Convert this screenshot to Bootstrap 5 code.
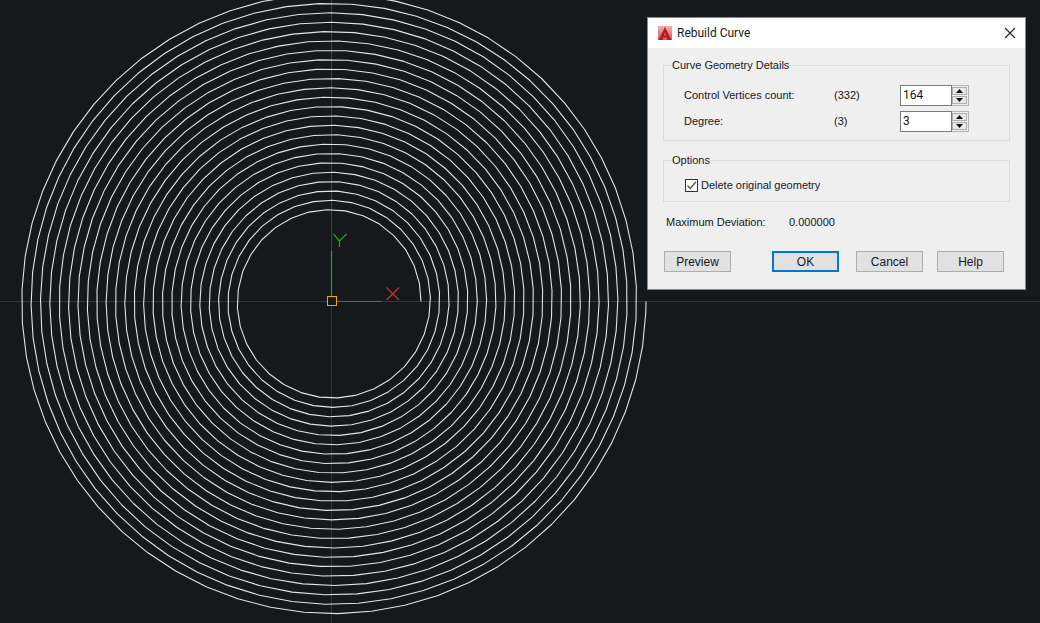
<!DOCTYPE html>
<html lang="en">
  <head>
    <meta charset="UTF-8" />
    <title>Rebuild Curve</title>
    <link href="https://cdn.jsdelivr.net/npm/bootstrap@5.3.3/dist/css/bootstrap.min.css" rel="stylesheet" />
    <style>
      html, body {
        height: 100%;
      }
      body {
        margin: 0;
        overflow: hidden;
        background-color: #15191c;
        position: relative;
        font-family: "Liberation Sans", Arial, sans-serif;
        font-size: 11px;
        color: #16161e;
      }
      .cad-canvas {
        position: absolute;
        left: 0;
        top: 0;
        width: 1040px;
        height: 623px;
      }
      .dlg-window {
        position: absolute;
        left: 647px;
        top: 17px;
        width: 379px;
        height: 273px;
        background-color: #efefef;
        border: 1px solid #8a8a8a;
      }
      .dlg-title {
        height: 30px;
        background-color: #fff;
        padding: 0 9px 0 10px;
        font-family: Roboto, "Liberation Sans", sans-serif;
        font-size: 12px;
        line-height: 30px;
      }
      .dlg-title-text {
        margin-left: 5px;
      }
      .dlg-body {
        padding: 11px 15px 0 15px;
      }
      .dlg-group {
        border: 1px solid #dcdcdc;
        margin: 0;
        padding: 0;
      }
      .dlg-group legend {
        float: none;
        width: auto;
        font-size: 11px;
        line-height: 12px;
        margin: 0 0 0 8px;
        padding: 0;
      }
      .dlg-group-geo {
        height: 82px;
      }
      .dlg-group-opt {
        height: 48px;
        margin-top: 13px;
      }
      .geo-rows {
        padding: 14px 0 0 20px;
      }
      .opt-rows {
        padding: 11px 0 0 21px;
      }
      .geo-row {
        height: 21px;
        margin-bottom: 5px;
      }
      .geo-label {
        width: 150px;
      }
      .geo-orig {
        width: 66px;
      }
      .spin-box {
        width: 69px;
        height: 21px;
      }
      .spin-value {
        width: 52px;
        height: 21px;
        background-color: #fff;
        border: 1px solid #7a7a7a;
        padding: 0 2px;
        line-height: 18px;
        font-family: Roboto, "Liberation Sans", sans-serif;
        font-size: 12px;
      }
      .spin-btns {
        width: 17px;
        height: 21px;
        border: 1px solid #b4b4b4;
        border-left: 0;
        padding: 1px 1px 1px 0;
        gap: 1px;
      }
      .spin-btn {
        flex: 1;
        background-color: #e8e8e8;
        border: 1px solid #adadad;
      }
      .dlg-check {
        width: 13px;
        height: 13px;
        border: 1px solid #333;
        background-color: #fff;
        margin-right: 3px;
      }
      .dev-row {
        margin: 13px 0 0 3px;
        height: 14px;
      }
      .dev-label {
        width: 123px;
      }
      .dlg-buttons {
        margin: 22px 0 0 1px;
      }
      .dlg-btn {
        width: 67px;
        height: 21px;
        padding: 0;
        border: 1px solid #adadad;
        border-radius: 0;
        background-color: #e1e1e1;
        color: #16161e;
        font-size: 12px;
        line-height: 18px;
      }
      .dlg-btn-default {
        border: 2px solid #0078d7;
        margin-left: 41px;
      }
      .dlg-btn-cancel {
        margin-left: 17px;
      }
      .dlg-btn-help {
        margin-left: 14px;
      }
    </style>
  </head>
  <body>
    <!-- Model space -->
    <svg class="cad-canvas" viewBox="0 0 1040 623" fill="none">
      <path d="M0 301.5H327" stroke="#2f3040" />
      <path d="M331.5 306V623" stroke="#2f3040" />
      <path d="M382 301.5H1040" stroke="#5c2428" />
      <path d="M331.5 0V251" stroke="#1f5a2a" />
      <polyline id="spiral" stroke="#e4e4e4" stroke-width="1.1" stroke-linejoin="round" />
      <path d="M337 301.5H382" stroke="#c83232" stroke-width="1.2" />
      <path d="M331.5 251V296" stroke="#1ea52a" stroke-width="1.2" />
      <path d="M386.5 287.5L399 300M399 287.5L386.5 300" stroke="#c83232" stroke-width="1.2" />
      <path d="M333.5 234L339.5 241L346.5 234M339.5 241V247" stroke="#1ea52a" stroke-width="1.2" />
      <rect x="327.5" y="296.5" width="9" height="9" stroke="#f0a800" />
    </svg>

    <!-- Dialog -->
    <div class="dlg-window">
      <div class="dlg-title d-flex align-items-center">
        <svg width="14" height="14" viewBox="0 0 14 14">
          <defs>
            <linearGradient id="logoBg" x1="0" y1="0" x2="0" y2="1">
              <stop offset="0" stop-color="#f0b0b0" />
              <stop offset="1" stop-color="#d85a5a" />
            </linearGradient>
          </defs>
          <rect width="14" height="14" fill="url(#logoBg)" />
          <path d="M7 1L13.5 14H9.5L8.6 11.5H5.4L4.5 14H0.5Z" fill="#b01c24" />
          <path d="M7 6L8 9.5H6Z" fill="#d85a5a" />
        </svg>
        <span class="dlg-title-text flex-grow-1">Rebuild Curve</span>
        <svg width="12" height="12" viewBox="0 0 12 12">
          <path d="M1 1L11 11M11 1L1 11" stroke="#222" stroke-width="1.1" fill="none" />
        </svg>
      </div>
      <div class="dlg-body">
        <fieldset class="dlg-group dlg-group-geo">
          <legend>Curve Geometry Details</legend>
          <div class="geo-rows">
            <div class="geo-row d-flex align-items-center">
              <span class="geo-label">Control Vertices count:</span>
              <span class="geo-orig">(332)</span>
              <div class="spin-box d-flex">
                <div class="spin-value">164</div>
                <div class="spin-btns d-flex flex-column">
                  <div class="spin-btn d-flex align-items-center justify-content-center">
                    <svg width="7" height="4" viewBox="0 0 7 4"><path d="M3.5 0L7 4H0Z" fill="#111" /></svg>
                  </div>
                  <div class="spin-btn d-flex align-items-center justify-content-center">
                    <svg width="7" height="4" viewBox="0 0 7 4"><path d="M0 0H7L3.5 4Z" fill="#111" /></svg>
                  </div>
                </div>
              </div>
            </div>
            <div class="geo-row d-flex align-items-center">
              <span class="geo-label">Degree:</span>
              <span class="geo-orig">(3)</span>
              <div class="spin-box d-flex">
                <div class="spin-value">3</div>
                <div class="spin-btns d-flex flex-column">
                  <div class="spin-btn d-flex align-items-center justify-content-center">
                    <svg width="7" height="4" viewBox="0 0 7 4"><path d="M3.5 0L7 4H0Z" fill="#111" /></svg>
                  </div>
                  <div class="spin-btn d-flex align-items-center justify-content-center">
                    <svg width="7" height="4" viewBox="0 0 7 4"><path d="M0 0H7L3.5 4Z" fill="#111" /></svg>
                  </div>
                </div>
              </div>
            </div>
          </div>
        </fieldset>

        <fieldset class="dlg-group dlg-group-opt">
          <legend>Options</legend>
          <div class="opt-rows d-flex align-items-center">
            <span class="dlg-check d-flex align-items-center justify-content-center">
              <svg width="11" height="11" viewBox="0 0 11 11">
                <path d="M1.5 5.5L4.3 8.5L9.8 2" stroke="#555" stroke-width="1.4" fill="none" />
              </svg>
            </span>
            <span>Delete original geometry</span>
          </div>
        </fieldset>

        <div class="dev-row d-flex align-items-center">
          <span class="dev-label">Maximum Deviation:</span>
          <span>0.000000</span>
        </div>

        <div class="dlg-buttons d-flex">
          <button type="button" class="btn dlg-btn">Preview</button>
          <button type="button" class="btn dlg-btn dlg-btn-default">OK</button>
          <button type="button" class="btn dlg-btn dlg-btn-cancel">Cancel</button>
          <button type="button" class="btn dlg-btn dlg-btn-help">Help</button>
        </div>
      </div>
    </div>

    <script>
      // 24 turns, counter-clockwise on screen, lightly faceted like the rebuilt curve
      const cx = 331.5;
      const cy = 301.5;
      const pitch = 225 / 24 / (2 * Math.PI);
      const endAngle = 24 * 2 * Math.PI;
      const points = [];
      let angle = 0;
      while (angle < endAngle) {
        const r = 89.5 + pitch * angle;
        points.push((cx + r * Math.cos(angle)).toFixed(1) + "," + (cy - r * Math.sin(angle)).toFixed(1));
        angle += (12 + 0.07 * r) / r;
      }
      const lastR = 89.5 + pitch * endAngle;
      points.push((cx + lastR).toFixed(1) + "," + cy);
      document.getElementById("spiral").setAttribute("points", points.join(" "));
    </script>
    <script src="https://cdn.jsdelivr.net/npm/bootstrap@5.3.3/dist/js/bootstrap.bundle.min.js"></script>
  </body>
</html>
